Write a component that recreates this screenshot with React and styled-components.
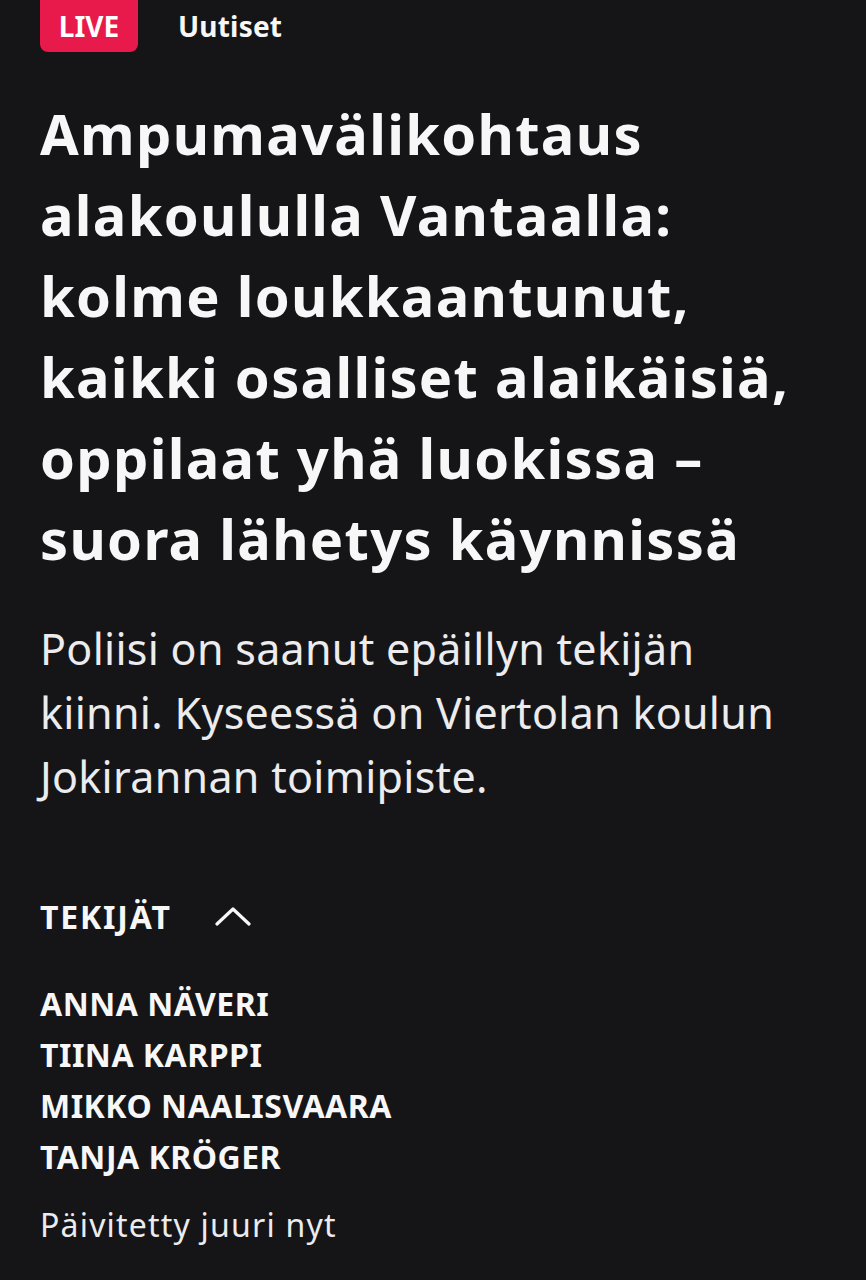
import React from "react";
import styled, { createGlobalStyle } from "styled-components";

const colors = {
  page: "#151518",
  text: "#f7f7f8",
  soft: "#ececee",
  live: "#e8194b",
};

const headlineLines = [
  "Ampumavälikohtaus",
  "alakoululla Vantaalla:",
  "kolme loukkaantunut,",
  "kaikki osalliset alaikäisiä,",
  "oppilaat yhä luokissa –",
  "suora lähetys käynnissä",
];

const leadLines = [
  "Poliisi on saanut epäillyn tekijän",
  "kiinni. Kyseessä on Viertolan koulun",
  "Jokirannan toimipiste.",
];

const authors = ["ANNA NÄVERI", "TIINA KARPPI", "MIKKO NAALISVAARA", "TANJA KRÖGER"];

function App() {
  return (
    <>
      <GlobalStyle />
      <Page>
        <TopBar>
          <LiveBadge>LIVE</LiveBadge>
          <Section>Uutiset</Section>
        </TopBar>
        <Headline>
          {headlineLines.map((line) => (
            <Line key={line}>{line}</Line>
          ))}
        </Headline>
        <Lead>
          {leadLines.map((line) => (
            <Line key={line}>{line}</Line>
          ))}
        </Lead>
        <AuthorsToggle>
          <span>TEKIJÄT</span>
          <svg width="36" height="20" viewBox="0 0 36 20" fill="none">
            <path
              d="M2 18 L18 3 L34 18"
              stroke={colors.text}
              strokeWidth="3.2"
              strokeLinecap="round"
              strokeLinejoin="round"
            />
          </svg>
        </AuthorsToggle>
        <AuthorList>
          {authors.map((name) => (
            <li key={name}>{name}</li>
          ))}
        </AuthorList>
        <Updated>Päivitetty juuri nyt</Updated>
      </Page>
    </>
  );
}

const GlobalStyle = createGlobalStyle`
  html, body {
    margin: 0;
    background: ${colors.page};
  }
  body {
    font-family: "Noto Sans", "Open Sans", sans-serif;
    color: ${colors.text};
  }
`;

const Page = styled.main`
  min-height: 1280px;
  padding: 0 40px;
  box-sizing: border-box;
  background: ${colors.page};
`;

const TopBar = styled.header`
  display: flex;
  align-items: center;
  gap: 40px;
  height: 52px;
`;

const LiveBadge = styled.div`
  display: flex;
  align-items: center;
  justify-content: center;
  width: 98px;
  height: 52px;
  background: ${colors.live};
  border-radius: 0 0 8px 8px;
  color: #fff;
  font-weight: 700;
  font-size: 28px;
`;

const Section = styled.div`
  font-weight: 700;
  font-size: 28px;
  letter-spacing: 0.2px;
`;

const Line = styled.span`
  display: block;
  white-space: nowrap;
`;

const Headline = styled.h1`
  margin: 41px 0 0;
  font-size: 56px;
  line-height: 81px;
  font-weight: 700;
  letter-spacing: 1.3px;
  color: ${colors.text};
`;

const Lead = styled.p`
  margin: 38px 0 0;
  font-size: 43px;
  line-height: 64px;
  font-weight: 400;
  letter-spacing: 0.3px;
  color: ${colors.soft};
`;

const AuthorsToggle = styled.div`
  display: flex;
  align-items: center;
  gap: 43px;
  margin-top: 87px;
  height: 40px;
  font-size: 32px;
  font-weight: 700;
  letter-spacing: 1.8px;
`;

const AuthorList = styled.ul`
  list-style: none;
  margin: 42px 0 0;
  padding: 0;
  font-size: 32px;
  line-height: 51px;
  font-weight: 700;
  letter-spacing: 0.5px;
`;

const Updated = styled.div`
  margin-top: 21px;
  font-size: 32px;
  line-height: 44px;
  letter-spacing: 1.2px;
  color: ${colors.soft};
`;

export default App;
